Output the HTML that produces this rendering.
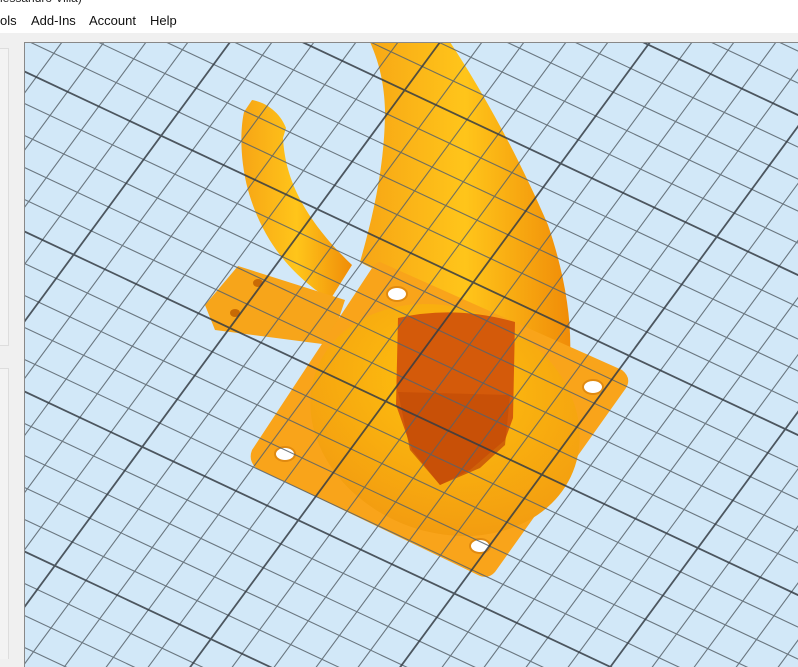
<!DOCTYPE html>
<html><head><style>
html,body{margin:0;padding:0;width:798px;height:667px;overflow:hidden;background:#f0f0f0;font-family:"Liberation Sans",sans-serif}
.title{position:absolute;left:0;top:-9px;font-size:12px;color:#222}
.menu{position:absolute;left:0;top:0;width:798px;height:33px;background:#fff}
.menu span{position:absolute;top:13px;font-size:13px;color:#111}
</style></head><body>
<div class="menu">
<div class="title">lessandro Villa)</div>
<span style="left:0">ols</span><span style="left:31px">Add-Ins</span><span style="left:89px">Account</span><span style="left:150px">Help</span>
</div>
<div style="position:absolute;left:0;top:48px;width:8px;height:296px;border:1px solid #ddd;border-left:none;background:#f3f3f3"></div>
<div style="position:absolute;left:0;top:368px;width:8px;height:290px;border:1px solid #ddd;border-left:none;border-bottom:none;background:#f3f3f3"></div>
<div style="position:absolute;left:24px;top:42px;width:774px;height:625px;overflow:hidden">
<svg style="display:block;overflow:hidden" width="774" height="625" viewBox="24 42 774 625">
<defs>
<radialGradient id="cv" cx="0.45" cy="0.35" r="0.7"><stop offset="0" stop-color="#ffc20e"/><stop offset="1" stop-color="#f29a10"/></radialGradient>
<linearGradient id="hn" x1="0" y1="0" x2="1" y2="0"><stop offset="0" stop-color="#f7a515"/><stop offset="0.5" stop-color="#ffc51a"/><stop offset="1" stop-color="#f08c08"/></linearGradient>
<line id="a" x1="0" y1="220" x2="800" y2="596"/>
<line id="b" x1="1101" y1="0" x2="586" y2="700"/>
</defs>
<rect x="24" y="42" width="774" height="625" fill="#d2e8f8"/>
<path d="M252 100 C265 102 280 112 286 128 L283 138 C285 175 300 215 352 265 L330 300 C300 280 265 250 248 190 C240 160 240 130 244 112 Z" fill="url(#hn)"/>
<path d="M370 42 L450 42 C485 95 520 160 548 225 C565 275 572 320 570 360 L500 340 C470 300 410 290 360 262 C375 210 385 160 385 110 C384 80 378 60 370 42Z" fill="url(#hn)"/>
<path d="M238 266 L345 300 L330 345 L215 330 L205 305Z" fill="#f7a51a"/>
<path d="M380 262 L622 370 Q632 378 626 388 L495 572 Q488 580 478 575 L256 468 Q248 460 252 450 L372 268 Q376 262 380 262Z" fill="#f9a41a"/>
<ellipse cx="445" cy="420" rx="138" ry="112" transform="rotate(22 445 420)" fill="url(#cv)"/>
<path d="M398 318 Q455 305 515 322 L513 418 L505 440 L470 470 L440 485 L412 450 L396 405Z" fill="#d45a0a"/>
<path d="M398 392 L510 395 L505 445 L480 468 L440 485 L410 450Z" fill="#c44e06" opacity="0.8"/>
<g fill="#fff" stroke="#e08a10" stroke-width="2">
<ellipse cx="397" cy="294" rx="10" ry="7"/>
<ellipse cx="593" cy="387" rx="10" ry="7"/>
<ellipse cx="285" cy="454" rx="10" ry="7"/>
<ellipse cx="480" cy="546" rx="10" ry="7"/>
</g>
<ellipse cx="258" cy="283" rx="5" ry="4" fill="#c86a05"/>
<ellipse cx="235" cy="313" rx="5" ry="4" fill="#c86a05"/>
<g stroke="#58626b" stroke-width="1.1" opacity="0.85">
<use href="#a" y="-544"/><use href="#a" y="-512"/><use href="#a" y="-448"/><use href="#a" y="-416"/><use href="#a" y="-384"/><use href="#a" y="-352"/><use href="#a" y="-288"/><use href="#a" y="-256"/><use href="#a" y="-224"/><use href="#a" y="-192"/><use href="#a" y="-128"/><use href="#a" y="-96"/><use href="#a" y="-64"/><use href="#a" y="-32"/><use href="#a" y="32"/><use href="#a" y="64"/><use href="#a" y="96"/><use href="#a" y="128"/><use href="#a" y="192"/><use href="#a" y="224"/><use href="#a" y="256"/><use href="#a" y="288"/><use href="#a" y="352"/><use href="#a" y="384"/><use href="#a" y="416"/><use href="#a" y="448"/>
<use href="#b" x="168"/><use href="#b" x="126"/><use href="#b" x="84"/><use href="#b" x="42"/><use href="#b" x="-42"/><use href="#b" x="-84"/><use href="#b" x="-126"/><use href="#b" x="-168"/><use href="#b" x="-252"/><use href="#b" x="-294"/><use href="#b" x="-336"/><use href="#b" x="-378"/><use href="#b" x="-462"/><use href="#b" x="-504"/><use href="#b" x="-546"/><use href="#b" x="-588"/><use href="#b" x="-672"/><use href="#b" x="-714"/><use href="#b" x="-756"/><use href="#b" x="-798"/><use href="#b" x="-882"/><use href="#b" x="-924"/><use href="#b" x="-966"/><use href="#b" x="-1008"/><use href="#b" x="-1050"/>
</g>
<g stroke="#363d45" stroke-width="1.8" opacity="0.85">
<use href="#a" y="-480"/><use href="#a" y="-320"/><use href="#a" y="-160"/><use href="#a" y="0"/><use href="#a" y="160"/><use href="#a" y="320"/>
<use href="#b" x="0"/><use href="#b" x="-210"/><use href="#b" x="-420"/><use href="#b" x="-630"/><use href="#b" x="-840"/>
</g>
<path d="M24.5 667V42.5H798" fill="none" stroke="#888"/>
</svg>
</div>
</body></html>
